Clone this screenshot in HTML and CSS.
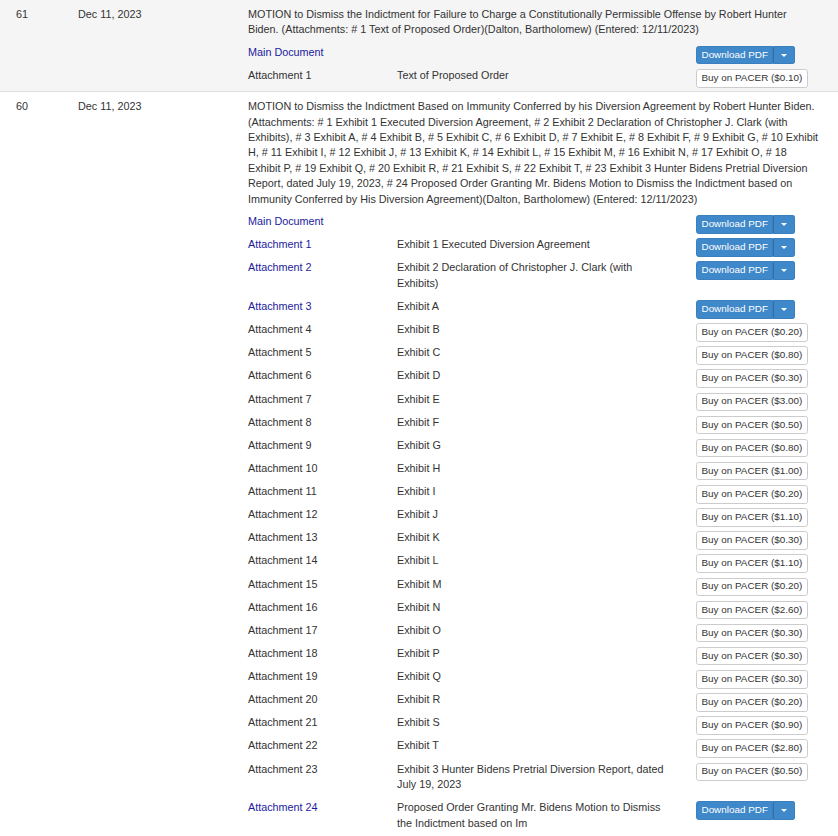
FILE: index.html
```html
<!DOCTYPE html>
<html lang="en">
<head>
<meta charset="utf-8">
<title>Docket entries</title>
<link rel="stylesheet" href="styles.css">
</head>
<body>
<div class="docket">
  <div class="entry shaded">
    <div class="num">61</div>
    <div class="date">Dec 11, 2023</div>
    <div class="body">
      <p class="desc">MOTION to Dismiss the Indictment for Failure to Charge a Constitutionally Permissible Offense by Robert Hunter Biden. (Attachments: # 1 Text of Proposed Order)(Dalton, Bartholomew) (Entered: 12/11/2023)</p>
      <div class="doc-row">
        <a class="label link" href="#">Main Document</a>
        <span class="doc-desc"></span>
        <div class="actions"><div class="btn-group"><a class="btn btn-primary" href="#">Download PDF</a><button class="btn btn-primary btn-caret" type="button"><span class="caret"></span></button></div></div>
      </div>
      <div class="doc-row">
        <span class="label">Attachment 1</span>
        <span class="doc-desc">Text of Proposed Order</span>
        <div class="actions"><a class="btn btn-default" href="#">Buy on PACER ($0.10)</a></div>
      </div>
    </div>
  </div>

  <div class="entry">
    <div class="num">60</div>
    <div class="date">Dec 11, 2023</div>
    <div class="body">
      <p class="desc">MOTION to Dismiss the Indictment Based on Immunity Conferred by his Diversion Agreement by Robert Hunter Biden. (Attachments: # 1 Exhibit 1 Executed Diversion Agreement, # 2 Exhibit 2 Declaration of Christopher J. Clark (with Exhibits), # 3 Exhibit A, # 4 Exhibit B, # 5 Exhibit C, # 6 Exhibit D, # 7 Exhibit E, # 8 Exhibit F, # 9 Exhibit G, # 10 Exhibit H, # 11 Exhibit I, # 12 Exhibit J, # 13 Exhibit K, # 14 Exhibit L, # 15 Exhibit M, # 16 Exhibit N, # 17 Exhibit O, # 18 Exhibit P, # 19 Exhibit Q, # 20 Exhibit R, # 21 Exhibit S, # 22 Exhibit T, # 23 Exhibit 3 Hunter Bidens Pretrial Diversion Report, dated July 19, 2023, # 24 Proposed Order Granting Mr. Bidens Motion to Dismiss the Indictment based on Immunity Conferred by His Diversion Agreement)(Dalton, Bartholomew) (Entered: 12/11/2023)</p>
      <div class="doc-row">
        <a class="label link" href="#">Main Document</a>
        <span class="doc-desc"></span>
        <div class="actions"><div class="btn-group"><a class="btn btn-primary" href="#">Download PDF</a><button class="btn btn-primary btn-caret" type="button"><span class="caret"></span></button></div></div>
      </div>
      <div class="doc-row">
        <a class="label link" href="#">Attachment 1</a>
        <span class="doc-desc">Exhibit 1 Executed Diversion Agreement</span>
        <div class="actions"><div class="btn-group"><a class="btn btn-primary" href="#">Download PDF</a><button class="btn btn-primary btn-caret" type="button"><span class="caret"></span></button></div></div>
      </div>
      <div class="doc-row">
        <a class="label link" href="#">Attachment 2</a>
        <span class="doc-desc">Exhibit 2 Declaration of Christopher J. Clark (with Exhibits)</span>
        <div class="actions"><div class="btn-group"><a class="btn btn-primary" href="#">Download PDF</a><button class="btn btn-primary btn-caret" type="button"><span class="caret"></span></button></div></div>
      </div>
      <div class="doc-row">
        <a class="label link" href="#">Attachment 3</a>
        <span class="doc-desc">Exhibit A</span>
        <div class="actions"><div class="btn-group"><a class="btn btn-primary" href="#">Download PDF</a><button class="btn btn-primary btn-caret" type="button"><span class="caret"></span></button></div></div>
      </div>
      <div class="doc-row"><span class="label">Attachment 4</span><span class="doc-desc">Exhibit B</span><div class="actions"><a class="btn btn-default" href="#">Buy on PACER ($0.20)</a></div></div>
      <div class="doc-row"><span class="label">Attachment 5</span><span class="doc-desc">Exhibit C</span><div class="actions"><a class="btn btn-default" href="#">Buy on PACER ($0.80)</a></div></div>
      <div class="doc-row"><span class="label">Attachment 6</span><span class="doc-desc">Exhibit D</span><div class="actions"><a class="btn btn-default" href="#">Buy on PACER ($0.30)</a></div></div>
      <div class="doc-row"><span class="label">Attachment 7</span><span class="doc-desc">Exhibit E</span><div class="actions"><a class="btn btn-default" href="#">Buy on PACER ($3.00)</a></div></div>
      <div class="doc-row"><span class="label">Attachment 8</span><span class="doc-desc">Exhibit F</span><div class="actions"><a class="btn btn-default" href="#">Buy on PACER ($0.50)</a></div></div>
      <div class="doc-row"><span class="label">Attachment 9</span><span class="doc-desc">Exhibit G</span><div class="actions"><a class="btn btn-default" href="#">Buy on PACER ($0.80)</a></div></div>
      <div class="doc-row"><span class="label">Attachment 10</span><span class="doc-desc">Exhibit H</span><div class="actions"><a class="btn btn-default" href="#">Buy on PACER ($1.00)</a></div></div>
      <div class="doc-row"><span class="label">Attachment 11</span><span class="doc-desc">Exhibit I</span><div class="actions"><a class="btn btn-default" href="#">Buy on PACER ($0.20)</a></div></div>
      <div class="doc-row"><span class="label">Attachment 12</span><span class="doc-desc">Exhibit J</span><div class="actions"><a class="btn btn-default" href="#">Buy on PACER ($1.10)</a></div></div>
      <div class="doc-row"><span class="label">Attachment 13</span><span class="doc-desc">Exhibit K</span><div class="actions"><a class="btn btn-default" href="#">Buy on PACER ($0.30)</a></div></div>
      <div class="doc-row"><span class="label">Attachment 14</span><span class="doc-desc">Exhibit L</span><div class="actions"><a class="btn btn-default" href="#">Buy on PACER ($1.10)</a></div></div>
      <div class="doc-row"><span class="label">Attachment 15</span><span class="doc-desc">Exhibit M</span><div class="actions"><a class="btn btn-default" href="#">Buy on PACER ($0.20)</a></div></div>
      <div class="doc-row"><span class="label">Attachment 16</span><span class="doc-desc">Exhibit N</span><div class="actions"><a class="btn btn-default" href="#">Buy on PACER ($2.60)</a></div></div>
      <div class="doc-row"><span class="label">Attachment 17</span><span class="doc-desc">Exhibit O</span><div class="actions"><a class="btn btn-default" href="#">Buy on PACER ($0.30)</a></div></div>
      <div class="doc-row"><span class="label">Attachment 18</span><span class="doc-desc">Exhibit P</span><div class="actions"><a class="btn btn-default" href="#">Buy on PACER ($0.30)</a></div></div>
      <div class="doc-row"><span class="label">Attachment 19</span><span class="doc-desc">Exhibit Q</span><div class="actions"><a class="btn btn-default" href="#">Buy on PACER ($0.30)</a></div></div>
      <div class="doc-row"><span class="label">Attachment 20</span><span class="doc-desc">Exhibit R</span><div class="actions"><a class="btn btn-default" href="#">Buy on PACER ($0.20)</a></div></div>
      <div class="doc-row"><span class="label">Attachment 21</span><span class="doc-desc">Exhibit S</span><div class="actions"><a class="btn btn-default" href="#">Buy on PACER ($0.90)</a></div></div>
      <div class="doc-row"><span class="label">Attachment 22</span><span class="doc-desc">Exhibit T</span><div class="actions"><a class="btn btn-default" href="#">Buy on PACER ($2.80)</a></div></div>
      <div class="doc-row"><span class="label">Attachment 23</span><span class="doc-desc">Exhibit 3 Hunter Bidens Pretrial Diversion Report, dated July 19, 2023</span><div class="actions"><a class="btn btn-default" href="#">Buy on PACER ($0.50)</a></div></div>
      <div class="doc-row">
        <a class="label link" href="#">Attachment 24</a>
        <span class="doc-desc">Proposed Order Granting Mr. Bidens Motion to Dismiss the Indictment based on Im</span>
        <div class="actions"><div class="btn-group"><a class="btn btn-primary" href="#">Download PDF</a><button class="btn btn-primary btn-caret" type="button"><span class="caret"></span></button></div></div>
      </div>
    </div>
  </div>
</div>
</body>
</html>
```

FILE: styles.css
```css
html, body {
  margin: 0;
  padding: 0;
  background: #ffffff;
}

body {
  font-family: "Liberation Sans", Arial, Helvetica, sans-serif;
  font-size: 10.8px;
  line-height: 15.43px;
  color: #333333;
}

.docket {
  width: 838px;
}

.entry {
  display: grid;
  grid-template-columns: 62px 170px 571px;
  padding: 7px 0 0 16px;
  border-bottom: 1px solid #dddddd;
}

.entry.shaded {
  background: #f5f5f5;
}

.desc {
  margin: 0 0 7px;
}

.doc-row {
  display: grid;
  grid-template-columns: 149px 299px auto;
  align-items: start;
  padding-bottom: 7.7px;
}

.label {
  color: #333333;
  text-decoration: none;
}

.link {
  color: #1b1b9e;
}

.doc-desc {
  padding-right: 24px;
}

.actions {
  display: flex;
  margin-top: 1px;
  margin-bottom: -4.3px;
}

.btn-group {
  display: inline-flex;
}

.btn {
  display: inline-block;
  box-sizing: border-box;
  font-family: "Liberation Sans", Arial, Helvetica, sans-serif;
  font-size: 9.9px;
  line-height: 14.85px;
  height: 18.6px;
  padding: 0.9px 4.5px;
  border: 1px solid transparent;
  border-radius: 2.7px;
  text-decoration: none;
  white-space: nowrap;
  cursor: pointer;
}

.btn-primary {
  background: #3f88c9;
  border-color: #3a80bf;
  color: #ffffff;
}

.btn-group .btn-primary:first-child {
  border-top-right-radius: 0;
  border-bottom-right-radius: 0;
}

.btn-caret {
  display: inline-flex;
  align-items: center;
  justify-content: center;
  width: 22px;
  padding: 0;
  border-left-color: #2f6ea8;
  border-top-left-radius: 0;
  border-bottom-left-radius: 0;
}

.caret {
  display: block;
  width: 0;
  height: 0;
  border-top: 3.6px solid #ffffff;
  border-left: 3.6px solid transparent;
  border-right: 3.6px solid transparent;
}

.btn-default {
  background: #ffffff;
  border-color: #cccccc;
  color: #333333;
}
```
